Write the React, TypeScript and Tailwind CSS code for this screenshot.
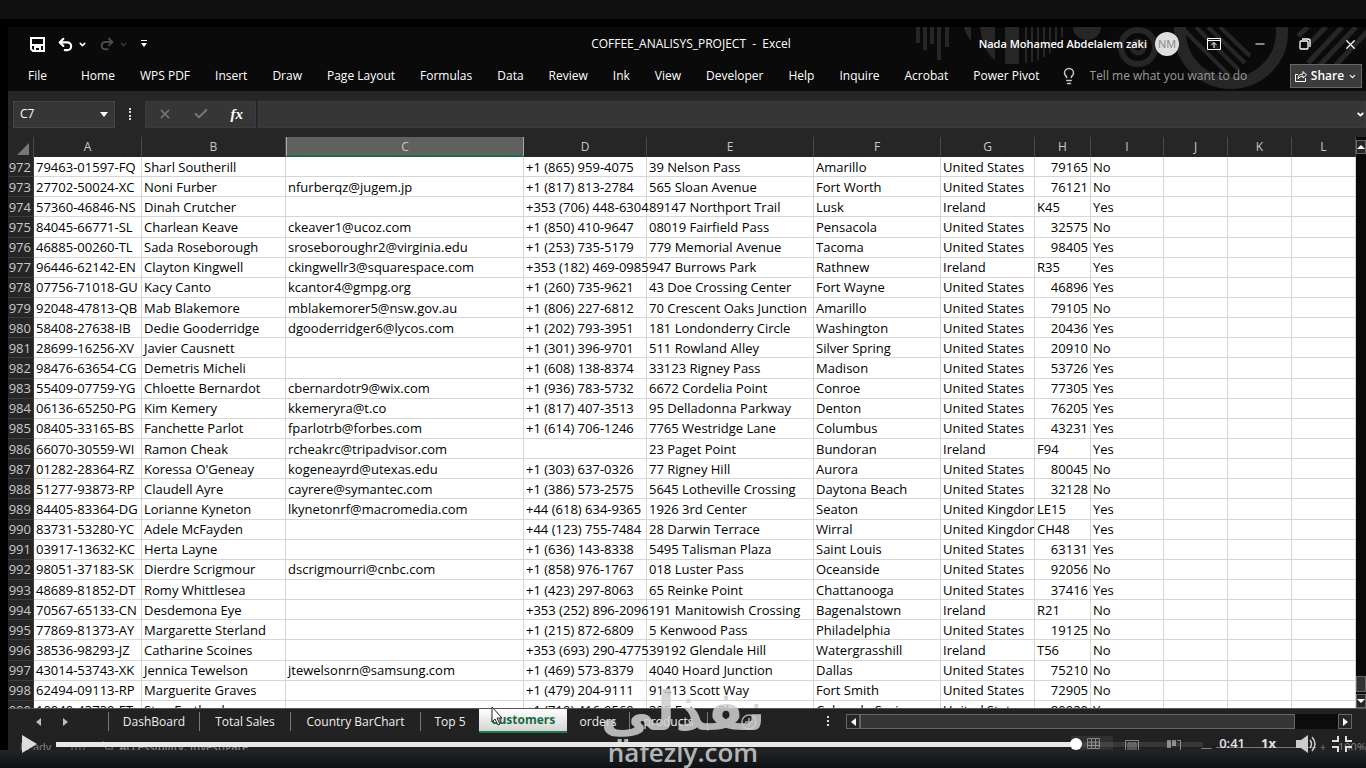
import React from "react";
import { Undo2, Redo2, X, Check, Lightbulb, ChevronDown, Minus } from "lucide-react";

const tabs = [
  "Home", "WPS PDF", "Insert", "Draw", "Page Layout", "Formulas", "Data", "Review",
  "Ink", "View", "Developer", "Help", "Inquire", "Acrobat", "Power Pivot",
];

const columns = [
  { name: "A", width: "w-[108px]" },
  { name: "B", width: "w-[144px]" },
  { name: "C", width: "w-[238px]" },
  { name: "D", width: "w-[123px]" },
  { name: "E", width: "w-[167px]" },
  { name: "F", width: "w-[127px]" },
  { name: "G", width: "w-[94px]" },
  { name: "H", width: "w-[56px]" },
  { name: "I", width: "w-[73px]" },
  { name: "J", width: "w-[64px]" },
  { name: "K", width: "w-[64px]" },
  { name: "L", width: "w-auto" },
];

const US = "United States";
const IE = "Ireland";
const UK = "United Kingdom";

const rows = [
  ["79463-01597-FQ", "Sharl Southerill", "", "+1 (865) 959-4075", "39 Nelson Pass", "Amarillo", US, "79165", "No"],
  ["27702-50024-XC", "Noni Furber", "nfurberqz@jugem.jp", "+1 (817) 813-2784", "565 Sloan Avenue", "Fort Worth", US, "76121", "No"],
  ["57360-46846-NS", "Dinah Crutcher", "", "+353 (706) 448-6304", "89147 Northport Trail", "Lusk", IE, "K45", "Yes"],
  ["84045-66771-SL", "Charlean Keave", "ckeaver1@ucoz.com", "+1 (850) 410-9647", "08019 Fairfield Pass", "Pensacola", US, "32575", "No"],
  ["46885-00260-TL", "Sada Roseborough", "sroseboroughr2@virginia.edu", "+1 (253) 735-5179", "779 Memorial Avenue", "Tacoma", US, "98405", "Yes"],
  ["96446-62142-EN", "Clayton Kingwell", "ckingwellr3@squarespace.com", "+353 (182) 469-0985", "947 Burrows Park", "Rathnew", IE, "R35", "Yes"],
  ["07756-71018-GU", "Kacy Canto", "kcantor4@gmpg.org", "+1 (260) 735-9621", "43 Doe Crossing Center", "Fort Wayne", US, "46896", "Yes"],
  ["92048-47813-QB", "Mab Blakemore", "mblakemorer5@nsw.gov.au", "+1 (806) 227-6812", "70 Crescent Oaks Junction", "Amarillo", US, "79105", "No"],
  ["58408-27638-IB", "Dedie Gooderridge", "dgooderridger6@lycos.com", "+1 (202) 793-3951", "181 Londonderry Circle", "Washington", US, "20436", "Yes"],
  ["28699-16256-XV", "Javier Causnett", "", "+1 (301) 396-9701", "511 Rowland Alley", "Silver Spring", US, "20910", "No"],
  ["98476-63654-CG", "Demetris Micheli", "", "+1 (608) 138-8374", "33123 Rigney Pass", "Madison", US, "53726", "Yes"],
  ["55409-07759-YG", "Chloette Bernardot", "cbernardotr9@wix.com", "+1 (936) 783-5732", "6672 Cordelia Point", "Conroe", US, "77305", "Yes"],
  ["06136-65250-PG", "Kim Kemery", "kkemeryra@t.co", "+1 (817) 407-3513", "95 Delladonna Parkway", "Denton", US, "76205", "Yes"],
  ["08405-33165-BS", "Fanchette Parlot", "fparlotrb@forbes.com", "+1 (614) 706-1246", "7765 Westridge Lane", "Columbus", US, "43231", "Yes"],
  ["66070-30559-WI", "Ramon Cheak", "rcheakrc@tripadvisor.com", "", "23 Paget Point", "Bundoran", IE, "F94", "Yes"],
  ["01282-28364-RZ", "Koressa O'Geneay", "kogeneayrd@utexas.edu", "+1 (303) 637-0326", "77 Rigney Hill", "Aurora", US, "80045", "No"],
  ["51277-93873-RP", "Claudell Ayre", "cayrere@symantec.com", "+1 (386) 573-2575", "5645 Lotheville Crossing", "Daytona Beach", US, "32128", "No"],
  ["84405-83364-DG", "Lorianne Kyneton", "lkynetonrf@macromedia.com", "+44 (618) 634-9365", "1926 3rd Center", "Seaton", UK, "LE15", "Yes"],
  ["83731-53280-YC", "Adele McFayden", "", "+44 (123) 755-7484", "28 Darwin Terrace", "Wirral", UK, "CH48", "Yes"],
  ["03917-13632-KC", "Herta Layne", "", "+1 (636) 143-8338", "5495 Talisman Plaza", "Saint Louis", US, "63131", "Yes"],
  ["98051-37183-SK", "Dierdre Scrigmour", "dscrigmourri@cnbc.com", "+1 (858) 976-1767", "018 Luster Pass", "Oceanside", US, "92056", "No"],
  ["48689-81852-DT", "Romy Whittlesea", "", "+1 (423) 297-8063", "65 Reinke Point", "Chattanooga", US, "37416", "Yes"],
  ["70567-65133-CN", "Desdemona Eye", "", "+353 (252) 896-2096", "191 Manitowish Crossing", "Bagenalstown", IE, "R21", "No"],
  ["77869-81373-AY", "Margarette Sterland", "", "+1 (215) 872-6809", "5 Kenwood Pass", "Philadelphia", US, "19125", "No"],
  ["38536-98293-JZ", "Catharine Scoines", "", "+353 (693) 290-4775", "39192 Glendale Hill", "Watergrasshill", IE, "T56", "No"],
  ["43014-53743-XK", "Jennica Tewelson", "jtewelsonrn@samsung.com", "+1 (469) 573-8379", "4040 Hoard Junction", "Dallas", US, "75210", "No"],
  ["62494-09113-RP", "Marguerite Graves", "", "+1 (479) 204-9111", "91413 Scott Way", "Fort Smith", US, "72905", "No"],
  ["10940-43739-ET", "Stan Fretland", "", "+1 (719) 416-9569", "325 Future Place", "Colorado Springs", US, "80920", "Yes"],
];

function TitleArt() {
  return (
    <svg className="absolute right-0 top-0 pointer-events-none" width="466" height="64" viewBox="900 27 466 64" fill="#262626">
      <path d="M916 27h4v16h-4zM923 27h4v23h-4zM930 27h4v17h-4zM937 27h4v33h-4zM945 27h4v20h-4z" />
      <path d="M964 27h7v14q-5-6-7-14zM980 27h15v33q-12-8-15-33zM1005 27h14v37h-14z" />
      <path d="M1025 27h2v36h-2zM1031 27h2v35h-2zM1037 27h2v33h-2zM1043 27h2v30h-2zM1049 27h2v26h-2zM1055 27h2v20h-2zM1061 27h2v10h-2z" />
      <path d="M1073 27h28a14 13 0 0 1-28 0z" />
      <g fill="none" stroke="#262626">
        <circle cx="1138" cy="47" r="17" strokeWidth="6" />
        <circle cx="1138" cy="47" r="6" strokeWidth="5" />
        <circle cx="1231" cy="32" r="51" strokeWidth="12" />
        <path d="M1184 30l46 46M1196 27l43 43M1208 27l37 36M1220 27l30 29" strokeWidth="4" />
        <path d="M1308 27l-10 9M1326 27l-18 18M1342 27l-34 36M1356 27l-38 40M1370 29l-36 38" strokeWidth="5" />
      </g>
    </svg>
  );
}

function TitleBar() {
  return (
    <div className="relative flex items-center h-[34px] shrink-0 pl-[22px] text-xs">
      <h1 className="absolute inset-x-0 pl-2 text-center text-white whitespace-pre">COFFEE_ANALISYS_PROJECT  -  Excel</h1>
      <div className="relative flex items-center text-white">
        <button aria-label="Save">
          <svg width="15" height="15" viewBox="0 0 15 15" fill="none" stroke="white" strokeWidth="2">
            <path d="M1 1h13v13H3l-2-2zM2 8h11M5 14v-4h5v4" />
          </svg>
        </button>
        <button aria-label="Undo" className="ml-3"><Undo2 size={17} strokeWidth={3} /></button>
        <ChevronDown size={9} strokeWidth={4} className="ml-1" />
        <button aria-label="Redo" className="ml-3 text-[#4a4a4a]"><Redo2 size={16} strokeWidth={3} /></button>
        <ChevronDown size={9} strokeWidth={3} className="ml-1 text-[#4a4a4a]" />
        <button aria-label="Customize toolbar" className="ml-3">
          <svg width="8" height="8" viewBox="0 0 8 8" fill="white">
            <path d="M1 0h6v1H1zM1 3h6L4 7z" />
          </svg>
        </button>
      </div>
      <div className="relative ml-auto flex items-center text-white">
        <span className="text-[11px] font-semibold">Nada Mohamed Abdelalem zaki</span>
        <span className="ml-2 flex size-6 items-center justify-center rounded-full bg-[#dedede] text-[11px] text-[#85858d]">NM</span>
        <button aria-label="Ribbon display options" className="ml-7">
          <svg width="14" height="12" viewBox="0 0 14 12" fill="none" stroke="white">
            <path d="M.5.5h13v11H.5zM.5 2.500h13M7 10V4.500M4.500 7L7 4.500L9.500 7" />
          </svg>
        </button>
        <button aria-label="Minimize" className="ml-8"><Minus size={14} /></button>
        <button aria-label="Restore" className="ml-8">
          <svg width="12" height="12" viewBox="0 0 12 12" fill="none" stroke="white" strokeWidth="1.300">
            <rect x="1" y="3" width="8" height="8" rx="1" />
            <path d="M3 1h6q2 0 2 2v6" />
          </svg>
        </button>
        <button aria-label="Close" className="ml-8 mr-2"><X size={15} strokeWidth={2} /></button>
      </div>
    </div>
  );
}

function Ribbon() {
  return (
    <nav className="relative flex h-[30px] shrink-0 items-center pl-5 pr-1 text-xs text-white">
      <button className="mr-[34px]">File</button>
      <div className="flex gap-[25px] whitespace-nowrap">
        {tabs.map((t) => (
          <button key={t}>{t}</button>
        ))}
      </div>
      <Lightbulb size={18} strokeWidth={2} className="ml-5 shrink-0 text-[#c4c4c4]" />
      <input
        aria-label="Tell me what you want to do"
        placeholder="Tell me what you want to do"
        className="ml-3 w-40 min-w-0 flex-1 bg-transparent outline-none placeholder:text-[#9a9a9a]"
      />
      <button className="flex h-6 w-[72px] shrink-0 items-center justify-center gap-1 border border-[#666] bg-[#3c3c3c] text-xs font-semibold">
        <svg width="12" height="12" viewBox="0 0 12 12" fill="none" stroke="white">
          <path d="M3 4.500H.5v7h10V8M3 9q0-5 5-5V1.500L11.500 5L8 8V6Q5 6 3 9z" />
        </svg>
        Share
        <ChevronDown size={9} strokeWidth={3} />
      </button>
    </nav>
  );
}

function FormulaBar() {
  return (
    <div className="flex h-[46px] shrink-0 items-center bg-[#262626] pl-[5px] text-white">
      <div className="flex h-[27px] w-[102px] items-center border border-[#444] bg-[#363636] px-1.5">
        <input aria-label="Name box" defaultValue="C7" className="w-16 flex-1 bg-transparent text-xs outline-none" />
        <svg width="8" height="5" viewBox="0 0 8 5" fill="white"><path d="M0 0h8L4 5z" /></svg>
      </div>
      <svg width="3" height="12" viewBox="0 0 3 12" fill="#ddd" className="ml-[14px] mr-[13px]">
        <path d="M0 0h2v2H0zM0 3h2v2H0zM0 7h2v2H0zM0 10h2v2H0z" />
      </svg>
      <div className="flex h-[27px] w-[111px] items-center justify-between border border-[#3c3c3c] bg-[#363636] pl-3 pr-3 text-[#777]">
        <button aria-label="Cancel"><X size={14} strokeWidth={3} /></button>
        <button aria-label="Enter"><Check size={16} strokeWidth={3} /></button>
        <button aria-label="Insert function" className="font-['Liberation_Serif',serif] text-[15px] font-bold italic text-white">fx</button>
      </div>
      <div className="ml-0.5 flex h-[27px] flex-1 items-center border border-[#3c3c3c] bg-[#363636]">
        <input aria-label="Formula" className="flex-1 bg-transparent px-2 text-xs outline-none" />
        <ChevronDown size={9} strokeWidth={5} />
      </div>
    </div>
  );
}

function Sheet() {
  return (
    <div className="flex min-h-0 flex-1 bg-[#262626]">
      <div className="min-w-0 flex-1 overflow-hidden">
        <table className="h-[584px] w-full table-fixed border-separate border-spacing-0 text-[13px] leading-4">
          <thead>
            <tr className="h-5 text-xs leading-4 text-[#c8c8c8]">
              <th className="w-[26px] border-r border-[#4a4a4a] p-0">
                <svg width="12" height="12" viewBox="0 0 12 12" fill="#777" className="ml-auto mr-1 mt-1"><path d="M12 0v12H0z" /></svg>
              </th>
              {columns.map((c) => (
                <th
                  key={c.name}
                  className={
                    c.width +
                    (c.name === "C"
                      ? " border-b-2 border-l border-r border-b-[#1f6b43] border-l-[#aaa] border-r-[#aaa] bg-[#606060] p-0 pt-0.5 font-normal"
                      : " border-r border-[#4a4a4a] p-0 font-normal")
                  }
                >
                  {c.name}
                </th>
              ))}
            </tr>
          </thead>
          <tbody>
            {rows.map((row, i) => (
              <tr key={row[0]} className="bg-white text-black">
                <th className="border-b border-r border-[#3c3c3c] bg-[#262626] p-0 pr-0.5 text-right text-[13px] font-normal text-[#c8c8c8]">{972 + i}</th>
                {columns.map((c, j) => (
                  <td
                    key={c.name}
                    className={
                      "whitespace-nowrap border-b border-r border-[#d6d6d6] py-0 pl-0.5 pr-0 " +
                      (c.name === "D" ? "" : "overflow-hidden ") +
                      (j === 7 && /^\d+$/.test(row[j]) ? "pr-0.5 text-right" : "text-left")
                    }
                  >
                    {row[j]}
                  </td>
                ))}
              </tr>
            ))}
          </tbody>
        </table>
      </div>
      {/* vertical scrollbar */}
      <div className="flex w-[10px] shrink-0 flex-col bg-[#0a0a0a] pt-[3px]">
        <button aria-label="Scroll up" className="flex h-[14px] items-center justify-center border border-[#666] bg-[#262626]">
          <svg width="8" height="4" viewBox="0 0 8 4" fill="white"><path d="M0 4h8L4 0z" /></svg>
        </button>
        <div className="flex-1" />
        <div className="mb-0.5 h-4 border border-[#666] bg-[#333]" />
        <button aria-label="Scroll down" className="flex h-[14px] items-center justify-center border border-[#666] bg-[#262626]">
          <svg width="8" height="4" viewBox="0 0 8 4" fill="white"><path d="M0 0h8L4 4z" /></svg>
        </button>
      </div>
    </div>
  );
}

function SheetTabs() {
  const tab = "h-[19px] border-l border-[#777] text-center whitespace-nowrap";
  return (
    <div className="flex h-7 shrink-0 items-center border-t border-[#555] bg-[#222] pb-0.5 text-xs text-[#eee]">
      <div className="flex w-[100px] items-center gap-[22px] pl-[28px]">
        <button aria-label="Previous sheet">
          <svg width="5" height="8" viewBox="0 0 5 8" fill="#bbb"><path d="M5 0v8L0 4z" /></svg>
        </button>
        <button aria-label="Next sheet">
          <svg width="5" height="8" viewBox="0 0 5 8" fill="#bbb"><path d="M0 0v8L5 4z" /></svg>
        </button>
      </div>
      <button className={tab + " w-[91px]"}>DashBoard</button>
      <button className={tab + " w-[91px]"}>Total Sales</button>
      <button className={tab + " w-[130px]"}>Country BarChart</button>
      <button className={tab + " w-[59px]"}>Top 5</button>
      <button className="-mt-px h-6 w-[88px] border-b-2 border-[#1f7a4a] bg-linear-to-b from-white to-[#d4d4d4] font-bold text-[#1b6b40]">Customers</button>
      <button className="h-[19px] w-[62px]">orders</button>
      <button className={tab + " w-[78px]"}>products</button>
      <button aria-label="New sheet" className="h-[19px] border-l border-[#777] pl-[33px]">
        <svg width="16" height="16" viewBox="0 0 16 16" fill="none" stroke="#aaa" strokeWidth="1.500"><circle cx="8" cy="8" r="7" /><path d="M8 4v8M4 8h8" /></svg>
      </button>
      <svg width="3" height="11" viewBox="0 0 3 11" fill="#ddd" className="ml-[70px] mr-4"><path d="M0 0h2v2H0zM0 4h2v2H0zM0 8h2v2H0z" /></svg>
      <div className="mr-[14px] flex h-[15px] flex-1 bg-[#0c0c0c]">
        <button aria-label="Scroll left" className="flex w-[14px] items-center justify-center border border-[#666] bg-[#262626]">
          <svg width="5" height="8" viewBox="0 0 5 8" fill="white"><path d="M5 0v8L0 4z" /></svg>
        </button>
        <div className="flex-1"><div className="h-full w-[91%] border border-[#666] bg-[#363636]" /></div>
        <button aria-label="Scroll right" className="flex w-[14px] items-center justify-center border border-[#666] bg-[#262626]">
          <svg width="5" height="8" viewBox="0 0 5 8" fill="white"><path d="M0 0v8L5 4z" /></svg>
        </button>
      </div>
    </div>
  );
}

function StatusBar() {
  return (
    <div className="flex h-[14px] shrink-0 overflow-hidden bg-[#212121] pl-3 text-[11px] leading-[22px] text-[#858585]">
      <span>Ready</span>
      <svg width="14" height="12" viewBox="0 0 14 12" fill="none" stroke="#777" className="ml-5 mt-1"><path d="M1 3h12v8H1zM1 6h12M5 3v8M9 3v8" /></svg>
      <svg width="14" height="12" viewBox="0 0 14 12" fill="none" stroke="#777" className="ml-4 mt-1"><path d="M2 1l3 8h7M5 3l7 5" /></svg>
      <span className="ml-1 font-semibold">Accessibility: Investigate</span>
      <div className="ml-auto flex items-start">
        <span className="flex h-[14px] w-[42px] items-center bg-[#303030] pl-4">
          <svg width="13" height="11" viewBox="0 0 13 11" fill="none" stroke="#858585"><path d="M.5.5h12v10H.5zM.5 4h12M.5 7.500h12M4.500.5v10M8.500.5v10" /></svg>
        </span>
        <svg width="14" height="12" viewBox="0 0 14 12" fill="none" stroke="#858585" className="ml-3 mt-1"><path d="M.5.5h13v13H.5zM3 3h8v9H3zM4 5h6M4 7h6M4 9h6" /></svg>
        <svg width="14" height="12" viewBox="0 0 14 12" fill="#858585" className="ml-7 mt-1"><path d="M0 0h4v8H0zM5 0h4v6H5zM10 0h4v12h-1V1h-3z" /></svg>
        <span className="ml-5">—</span>
        <span className="mx-1 mt-[11px] h-px w-[100px] bg-[#777]" />
        <span>+</span>
        <span className="ml-3">100%</span>
      </div>
    </div>
  );
}

function Watermark() {
  return (
    <div className="pointer-events-none absolute bottom-0 left-1/2 h-[88px] w-[168px] -translate-x-1/2 text-[#d0d0d0] opacity-85">
      <p lang="ar" dir="rtl" className="absolute inset-x-0 top-0 text-center font-['DejaVu_Sans',sans-serif] text-[54px] font-bold leading-[64px]">نفذلي</p>
      <p className="absolute inset-x-0 bottom-0 text-center text-[26px] font-semibold leading-8">nafezly.com</p>
    </div>
  );
}

function PlayerControls() {
  return (
    <div className="absolute inset-x-0 bottom-3 flex h-6 items-center text-[#e2e2e2]">
      <button aria-label="Play" className="ml-[22px]">
        <svg width="15" height="18" viewBox="0 0 15 18" fill="#ddd"><path d="M0 0l15 9L0 18z" /></svg>
      </button>
      <input
        type="range"
        aria-label="Seek"
        defaultValue={893}
        max={1000}
        className="ml-[19px] h-[5px] min-w-0 flex-1 appearance-none bg-linear-to-r from-[#e8e8e8] from-89% to-white/10 to-89% [&::-webkit-slider-thumb]:size-3 [&::-webkit-slider-thumb]:appearance-none [&::-webkit-slider-thumb]:rounded-full [&::-webkit-slider-thumb]:bg-white"
      />
      <span className="ml-4 text-[13px] font-semibold">0:41</span>
      <button className="ml-4 text-[13px] font-bold">1x</button>
      <button aria-label="Volume" className="ml-5">
        <svg width="20" height="18" viewBox="0 0 20 18" fill="#ccc">
          <path d="M0 5h5l7-5v18l-7-5H0z" />
          <path d="M14 5q3 4 0 8M16 2q6 7 0 14" fill="none" stroke="#ccc" strokeWidth="1.500" />
        </svg>
      </button>
      <button aria-label="Exit fullscreen" className="ml-4 mr-[14px]">
        <svg width="20" height="16" viewBox="0 0 20 16" fill="none" stroke="#ddd" strokeWidth="2"><path d="M0 5h6V0M20 5h-6V0M0 11h6v5M20 11h-6v5" /></svg>
      </button>
    </div>
  );
}

export default function App() {
  return (
    <div className="relative flex h-screen flex-col overflow-hidden bg-black font-['Open_Sans','Noto_Sans',sans-serif]">
      <div className="h-[19px] shrink-0 bg-[#101010]" />
      <div className="ml-2 mt-2 flex min-h-0 flex-1 flex-col">
        <div className="relative bg-[#0a0a0a]">
          <TitleArt />
          <TitleBar />
          <Ribbon />
        </div>
        <FormulaBar />
        <Sheet />
        <SheetTabs />
        <StatusBar />
      </div>
      <div className="h-[18px] shrink-0 bg-linear-to-b from-[#212528] to-[#0d1114]" />

      {/* mouse pointer */}
      <svg className="absolute left-[491px] top-[706px]" width="13" height="20" viewBox="0 0 13 20" fill="white" stroke="#222">
        <path d="M1 1v15l3-3 3 6 2-1-3-6h5z" />
      </svg>
      <Watermark />
      <PlayerControls />
    </div>
  );
}
